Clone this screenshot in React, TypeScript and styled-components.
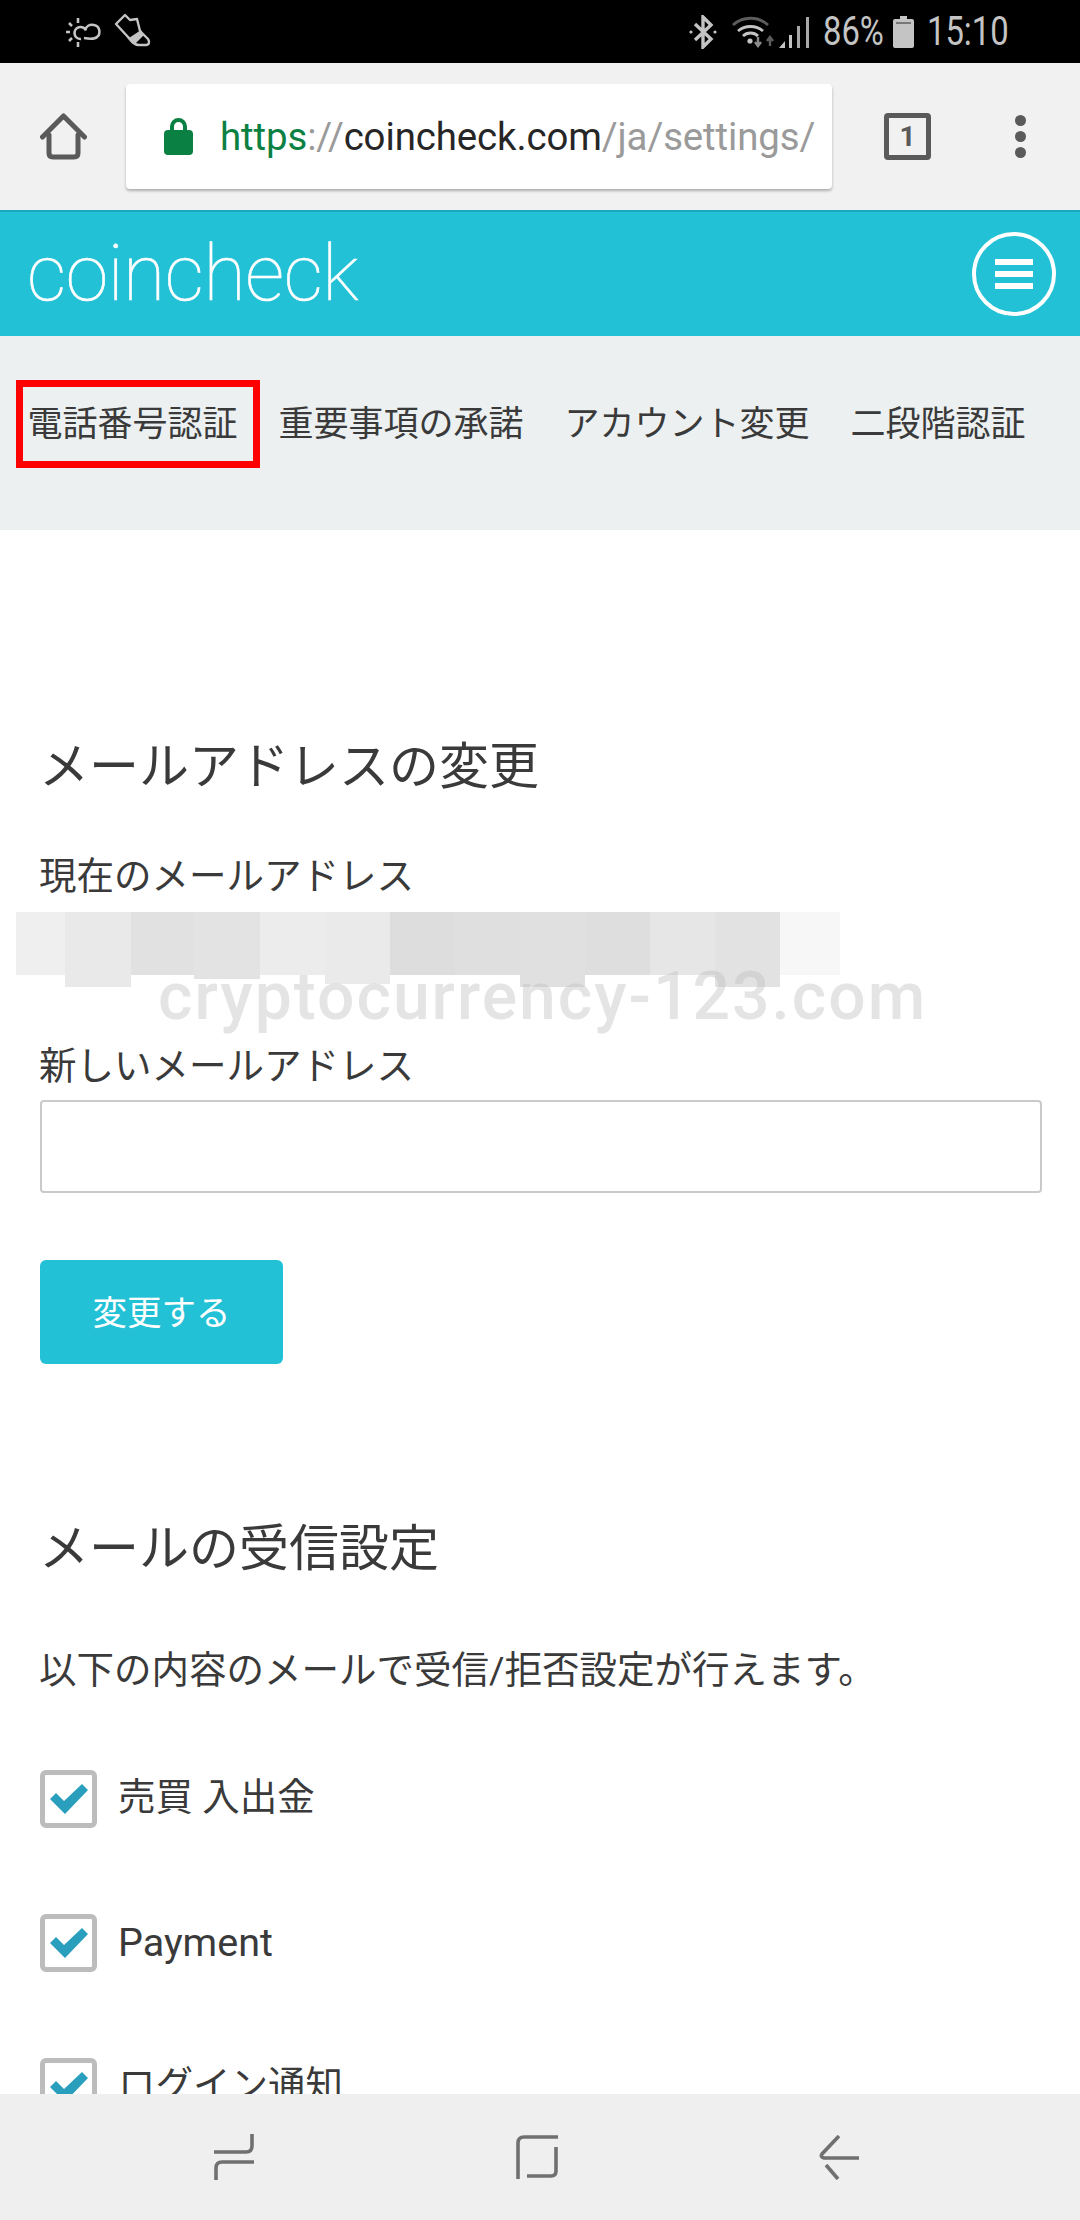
import React from "react";
import styled, { createGlobalStyle } from "styled-components";

const GlobalStyle = createGlobalStyle`
  html, body {
    margin: 0;
    padding: 0;
    background: #fff;
  }
  * {
    box-sizing: border-box;
  }
`;

const JP = `"Roboto", "Noto Sans CJK JP", sans-serif`;

const Screen = styled.div`
  width: 1080px;
  height: 2220px;
  display: flex;
  flex-direction: column;
  overflow: hidden;
  font-family: ${JP};
  color: #3a3a3a;
`;

/* status bar */
const StatusBar = styled.div`
  height: 63px;
  flex: none;
  background: #000;
  color: #c4c4c4;
  display: flex;
  align-items: center;
  justify-content: space-between;
  padding: 0 72px 0 65px;
`;

const StatusGroup = styled.div`
  display: flex;
  align-items: center;
`;

const StatusSlot = styled.span<{ $ml: number }>`
  display: flex;
  margin-left: ${({ $ml }) => $ml}px;
`;

const StatusText = styled.span<{ $w: number; $ml: number }>`
  display: block;
  width: ${({ $w }) => $w}px;
  margin-left: ${({ $ml }) => $ml}px;
  font-size: 40px;
  line-height: 63px;
  font-family: "Roboto", sans-serif;
  transform: scaleX(0.82);
  transform-origin: left center;
  white-space: nowrap;
`;

/* browser toolbar */
const Toolbar = styled.div`
  height: 147px;
  flex: none;
  background: #f1f1f1;
  display: flex;
  align-items: center;
  padding: 0 0 0 40px;
`;

const UrlBox = styled.div`
  width: 706px;
  height: 105px;
  margin-left: 39px;
  background: #fff;
  border-radius: 4px;
  box-shadow: 0 2px 3px rgba(0, 0, 0, 0.28);
  display: flex;
  align-items: center;
  padding-left: 38px;
  overflow: hidden;
`;

const UrlText = styled.div`
  margin-left: 27px;
  font-family: "Roboto", sans-serif;
  font-size: 38.4px;
  letter-spacing: -0.1px;
  white-space: nowrap;
  color: #9a9a9a;
`;

const UrlScheme = styled.span`
  color: #0b8043;
`;

const UrlHost = styled.span`
  color: #262626;
`;

const TabCount = styled.div`
  width: 47px;
  height: 47px;
  margin-left: 52px;
  border: 5px solid #5a5a5a;
  border-radius: 4px;
  display: flex;
  align-items: center;
  justify-content: center;
  font-family: "Roboto", sans-serif;
  font-size: 28px;
  font-weight: 700;
  color: #5a5a5a;
`;

const MoreDots = styled.div`
  width: 11px;
  margin-left: 84px;
  display: flex;
  flex-direction: column;
  gap: 5px;
`;

const Dot = styled.span`
  width: 11px;
  height: 11px;
  border-radius: 50%;
  background: #5a5a5a;
`;

/* site header */
const SiteHeader = styled.header`
  height: 126px;
  flex: none;
  background: #22c1d6;
  border-top: 2px solid #1aa9bb;
  display: flex;
  align-items: center;
  justify-content: space-between;
  padding: 0 24px 0 27px;
`;

const Logo = styled.div`
  font-family: "Roboto", sans-serif;
  font-weight: 100;
  font-size: 77px;
  letter-spacing: -0.4px;
  line-height: 1;
  color: #fff;
  -webkit-text-stroke: 0.6px #fff;
`;

const MenuButton = styled.div`
  width: 84px;
  height: 84px;
  border: 4px solid #fff;
  border-radius: 50%;
  display: flex;
  flex-direction: column;
  align-items: center;
  justify-content: center;
  gap: 6px;
`;

const MenuBar = styled.span`
  width: 38px;
  height: 6px;
  background: #fff;
`;

/* settings tabs */
const TabNav = styled.nav`
  height: 194px;
  flex: none;
  background: #ecf0f1;
  display: flex;
  align-items: flex-start;
  padding: 44px 0 0 7px;
`;

const TabItem = styled.div<{ $marked?: boolean }>`
  position: relative;
  height: 88px;
  padding: 0 20.5px;
  font-size: 35px;
  line-height: 89px;
  white-space: nowrap;
  &::after {
    content: "";
    display: ${({ $marked }) => ($marked ? "block" : "none")};
    position: absolute;
    inset: 0 -2px 0 9px;
    border: 7px solid #ff0000;
  }
`;

/* page content */
const Content = styled.main`
  flex: 1;
  min-height: 0;
  overflow: hidden;
  background: #fff;
  padding: 207px 38px 0 40px;
`;

const Heading = styled.h2<{ $mt?: number }>`
  margin: ${({ $mt }) => $mt ?? 0}px 0 0 -1px;
  font-size: 50px;
  font-weight: 400;
  line-height: 60px;
`;

const FieldLabel = styled.div<{ $mt: number }>`
  margin: ${({ $mt }) => $mt}px 0 0 -1px;
  font-size: 37.5px;
  line-height: 44px;
`;

const Redacted = styled.div`
  position: relative;
  height: 132px;
  margin: 14px 0 0 -24px;
  display: flex;
  align-items: flex-start;
`;

const Pixel = styled.span<{ $w: number; $h: number; $c: string }>`
  width: ${({ $w }) => $w}px;
  height: ${({ $h }) => $h}px;
  background: ${({ $c }) => $c};
`;

const Watermark = styled.div`
  position: absolute;
  left: 142px;
  top: 46px;
  font-family: "Roboto", sans-serif;
  font-size: 66px;
  line-height: 78px;
  font-weight: 500;
  letter-spacing: 2px;
  white-space: nowrap;
  color: rgba(190, 190, 190, 0.42);
`;

const TextInput = styled.div`
  height: 93px;
  margin-top: 12px;
  border: 2.5px solid #cacaca;
  border-radius: 4px;
  background: #fff;
`;

const SubmitButton = styled.div`
  width: 243px;
  height: 104px;
  margin-top: 67px;
  padding-bottom: 5px;
  border-radius: 6px;
  background: #22c1d6;
  color: #fff;
  font-size: 34.5px;
  display: flex;
  align-items: center;
  justify-content: center;
`;

const Description = styled.p`
  margin: 69px 0 0 -1px;
  font-size: 37.5px;
  line-height: 44px;
  white-space: nowrap;
`;

const CheckList = styled.div`
  margin-top: 78px;
  display: flex;
  flex-direction: column;
  gap: 86px;
`;

const CheckRow = styled.label`
  display: flex;
  align-items: center;
  gap: 21px;
  height: 58px;
`;

const CheckLabel = styled.span<{ $latin?: boolean }>`
  font-size: ${({ $latin }) => ($latin ? 39.5 : 37.5)}px;
  line-height: 58px;
  margin-top: ${({ $latin }) => ($latin ? 0 : -5)}px;
`;

const CheckBox = styled.span`
  width: 57px;
  height: 58px;
  flex: none;
  border: 5px solid #bcbcbc;
  border-radius: 6px;
  background: #fff;
  display: flex;
  align-items: center;
  justify-content: center;
`;

/* android nav bar */
const NavBar = styled.div`
  height: 126px;
  flex: none;
  background: #efefef;
  display: flex;
  align-items: center;
  padding: 0 220px 0 214px;
  justify-content: space-between;
`;

const pixels: [number, number, string][] = [
  [49, 63, "#efefef"],
  [66, 75, "#e9e9e9"],
  [63, 63, "#e1e1e1"],
  [66, 67, "#e3e3e3"],
  [65, 63, "#ececec"],
  [65, 72, "#eaeaea"],
  [65, 63, "#dddddd"],
  [65, 63, "#dfdfdf"],
  [65, 75, "#e0e0e0"],
  [65, 63, "#dedede"],
  [65, 63, "#e6e6e6"],
  [65, 75, "#e2e2e2"],
  [60, 63, "#f7f7f7"],
];

const WeatherIcon = () => (
  <svg width="38" height="32" viewBox="0 0 38 32" fill="none" stroke="#c4c4c4" strokeWidth="2.6">
    <path d="M16 23a6 6 0 1 1 5-8.5M19 22c6 1 11 1 13-1 4-3 3-11-3-12-5-1-8 2-9 5" />
    <path d="M1 16h4M13 2v5M13 26v5M4 7l3 3M4 25l3-3" />
  </svg>
);

const ShoeIcon = () => (
  <svg width="38" height="38" viewBox="0 0 38 38" fill="none" stroke="#c4c4c4" strokeWidth="2.4">
    <path d="M3 11 12 2l5 5 7-1 3 12 8 8c2 3 1 6-2 6h-7c-5 0-8-4-11-8z" strokeLinejoin="round" />
    <path d="M16 25l12-8 3 5-9 9z" fill="#c4c4c4" stroke="none" />
  </svg>
);

const BluetoothIcon = () => (
  <svg width="30" height="34" viewBox="0 0 30 34" fill="none" stroke="#c4c4c4" strokeWidth="3.4">
    <path d="M7 9l16 15-8 8V2l8 8L7 25" />
    <circle cx="3" cy="17" r="1.6" fill="#c4c4c4" stroke="none" />
    <circle cx="27" cy="17" r="1.6" fill="#c4c4c4" stroke="none" />
  </svg>
);

const WifiIcon = () => (
  <svg width="44" height="34" viewBox="0 0 44 34" fill="none">
    <path d="M1 10C11 1 26 1 36 10" stroke="#5c5c5c" strokeWidth="3" />
    <path d="M6 16c7-6 18-6 25 0M11 21c4-4 11-4 15 0" stroke="#c4c4c4" strokeWidth="2.8" />
    <circle cx="18" cy="26" r="2.6" fill="#c4c4c4" />
    <path d="M26 22v7M23 27l3 4 3-4" stroke="#8a8a8a" strokeWidth="2.4" />
    <path d="M38 31v-8M35 26l3-4 3 4" stroke="#5c5c5c" strokeWidth="2.4" />
  </svg>
);

const SignalIcon = () => (
  <svg width="32" height="32" viewBox="0 0 32 32" fill="#c4c4c4">
    <path d="M0 32l6-7v7z" />
    <rect x="10" y="19" width="3" height="13" />
    <rect x="18" y="10" width="3" height="22" fill="#a8a8a8" />
    <rect x="27" y="1" width="3" height="31" fill="#a8a8a8" />
  </svg>
);

const BatteryIcon = () => (
  <svg width="21" height="32" viewBox="0 0 21 32">
    <path d="M7 0h7v3h5a2 2 0 0 1 2 2v25a2 2 0 0 1-2 2H2a2 2 0 0 1-2-2V5a2 2 0 0 1 2-2h5z" fill="#c4c4c4" />
    <rect x="3" y="6" width="15" height="2" fill="#777" />
  </svg>
);

const HomeIcon = () => (
  <svg
    width="47"
    height="47"
    viewBox="0 0 47 47"
    fill="none"
    stroke="#5a5a5a"
    strokeWidth="5"
    strokeLinejoin="round"
    strokeLinecap="round"
  >
    <path d="M2.5 24 23.5 3l21 21" />
    <path d="M9 22v18q0 4 4 4h21q4 0 4-4V22" />
  </svg>
);

const LockIcon = () => (
  <svg width="29" height="37" viewBox="0 0 29 37">
    <rect x="0" y="12" width="29" height="25" rx="4" fill="#0b8043" />
    <path d="M8 13V8.5a6.5 6.5 0 0 1 13 0V13" fill="none" stroke="#0b8043" strokeWidth="4" />
  </svg>
);

const CheckMark = () => (
  <svg width="38" height="30" viewBox="0 0 38 30">
    <path d="M0 15l6-6 8 8L32 0l6 6-23 24z" fill="#2a9fbd" />
  </svg>
);

const RecentIcon = () => (
  <svg width="40" height="46" viewBox="0 0 40 46" fill="none" stroke="#707070" strokeWidth="3.6">
    <path d="M38 0v12q0 6-6 6H0" />
    <path d="M40 28H8q-6 0-6 6v12" />
  </svg>
);

const OverviewIcon = () => (
  <svg width="42" height="44" viewBox="0 0 42 44" fill="none" stroke="#707070" strokeWidth="3.6">
    <path d="M42 2H8Q2 2 2 8v36" />
    <path d="M40 12v24q0 5-5 5H11" />
  </svg>
);

const BackIcon = () => (
  <svg width="41" height="45" viewBox="0 0 41 45" fill="none" stroke="#707070" strokeWidth="3.6">
    <path d="M20 1 3 19q-2 3 2 4h35" />
    <path d="M7 30l12 14" />
  </svg>
);

const App: React.FC = () => {
  return (
    <Screen>
      <GlobalStyle />
      <StatusBar>
        <StatusGroup>
          <WeatherIcon />
          <StatusSlot $ml={10}>
            <ShoeIcon />
          </StatusSlot>
        </StatusGroup>
        <StatusGroup>
          <BluetoothIcon />
          <StatusSlot $ml={14}>
            <WifiIcon />
          </StatusSlot>
          <StatusSlot $ml={3}>
            <SignalIcon />
          </StatusSlot>
          <StatusText $w={60} $ml={12}>
            86%
          </StatusText>
          <StatusSlot $ml={10}>
            <BatteryIcon />
          </StatusSlot>
          <StatusText $w={81} $ml={13}>
            15:10
          </StatusText>
        </StatusGroup>
      </StatusBar>

      <Toolbar>
        <HomeIcon />
        <UrlBox>
          <LockIcon />
          <UrlText>
            <UrlScheme>https</UrlScheme>://<UrlHost>coincheck.com</UrlHost>/ja/settings/
          </UrlText>
        </UrlBox>
        <TabCount>1</TabCount>
        <MoreDots>
          <Dot />
          <Dot />
          <Dot />
        </MoreDots>
      </Toolbar>

      <SiteHeader>
        <Logo>coincheck</Logo>
        <MenuButton>
          <MenuBar />
          <MenuBar />
          <MenuBar />
        </MenuButton>
      </SiteHeader>

      <TabNav>
        <TabItem $marked>電話番号認証</TabItem>
        <TabItem>重要事項の承諾</TabItem>
        <TabItem>アカウント変更</TabItem>
        <TabItem>二段階認証</TabItem>
      </TabNav>

      <Content>
        <Heading>メールアドレスの変更</Heading>
        <FieldLabel $mt={57}>現在のメールアドレス</FieldLabel>
        <Redacted>
          {pixels.map(([w, h, c], i) => (
            <Pixel key={i} $w={w} $h={h} $c={c} />
          ))}
          <Watermark>cryptocurrency-123.com</Watermark>
        </Redacted>
        <FieldLabel $mt={0}>新しいメールアドレス</FieldLabel>
        <TextInput />
        <SubmitButton>変更する</SubmitButton>

        <Heading $mt={155}>メールの受信設定</Heading>
        <Description>以下の内容のメールで受信/拒否設定が行えます。</Description>
        <CheckList>
          <CheckRow>
            <CheckBox>
              <CheckMark />
            </CheckBox>
            <CheckLabel>売買 入出金</CheckLabel>
          </CheckRow>
          <CheckRow>
            <CheckBox>
              <CheckMark />
            </CheckBox>
            <CheckLabel $latin>Payment</CheckLabel>
          </CheckRow>
          <CheckRow>
            <CheckBox>
              <CheckMark />
            </CheckBox>
            <CheckLabel>ログイン通知</CheckLabel>
          </CheckRow>
        </CheckList>
      </Content>

      <NavBar>
        <RecentIcon />
        <OverviewIcon />
        <BackIcon />
      </NavBar>
    </Screen>
  );
};

export default App;
